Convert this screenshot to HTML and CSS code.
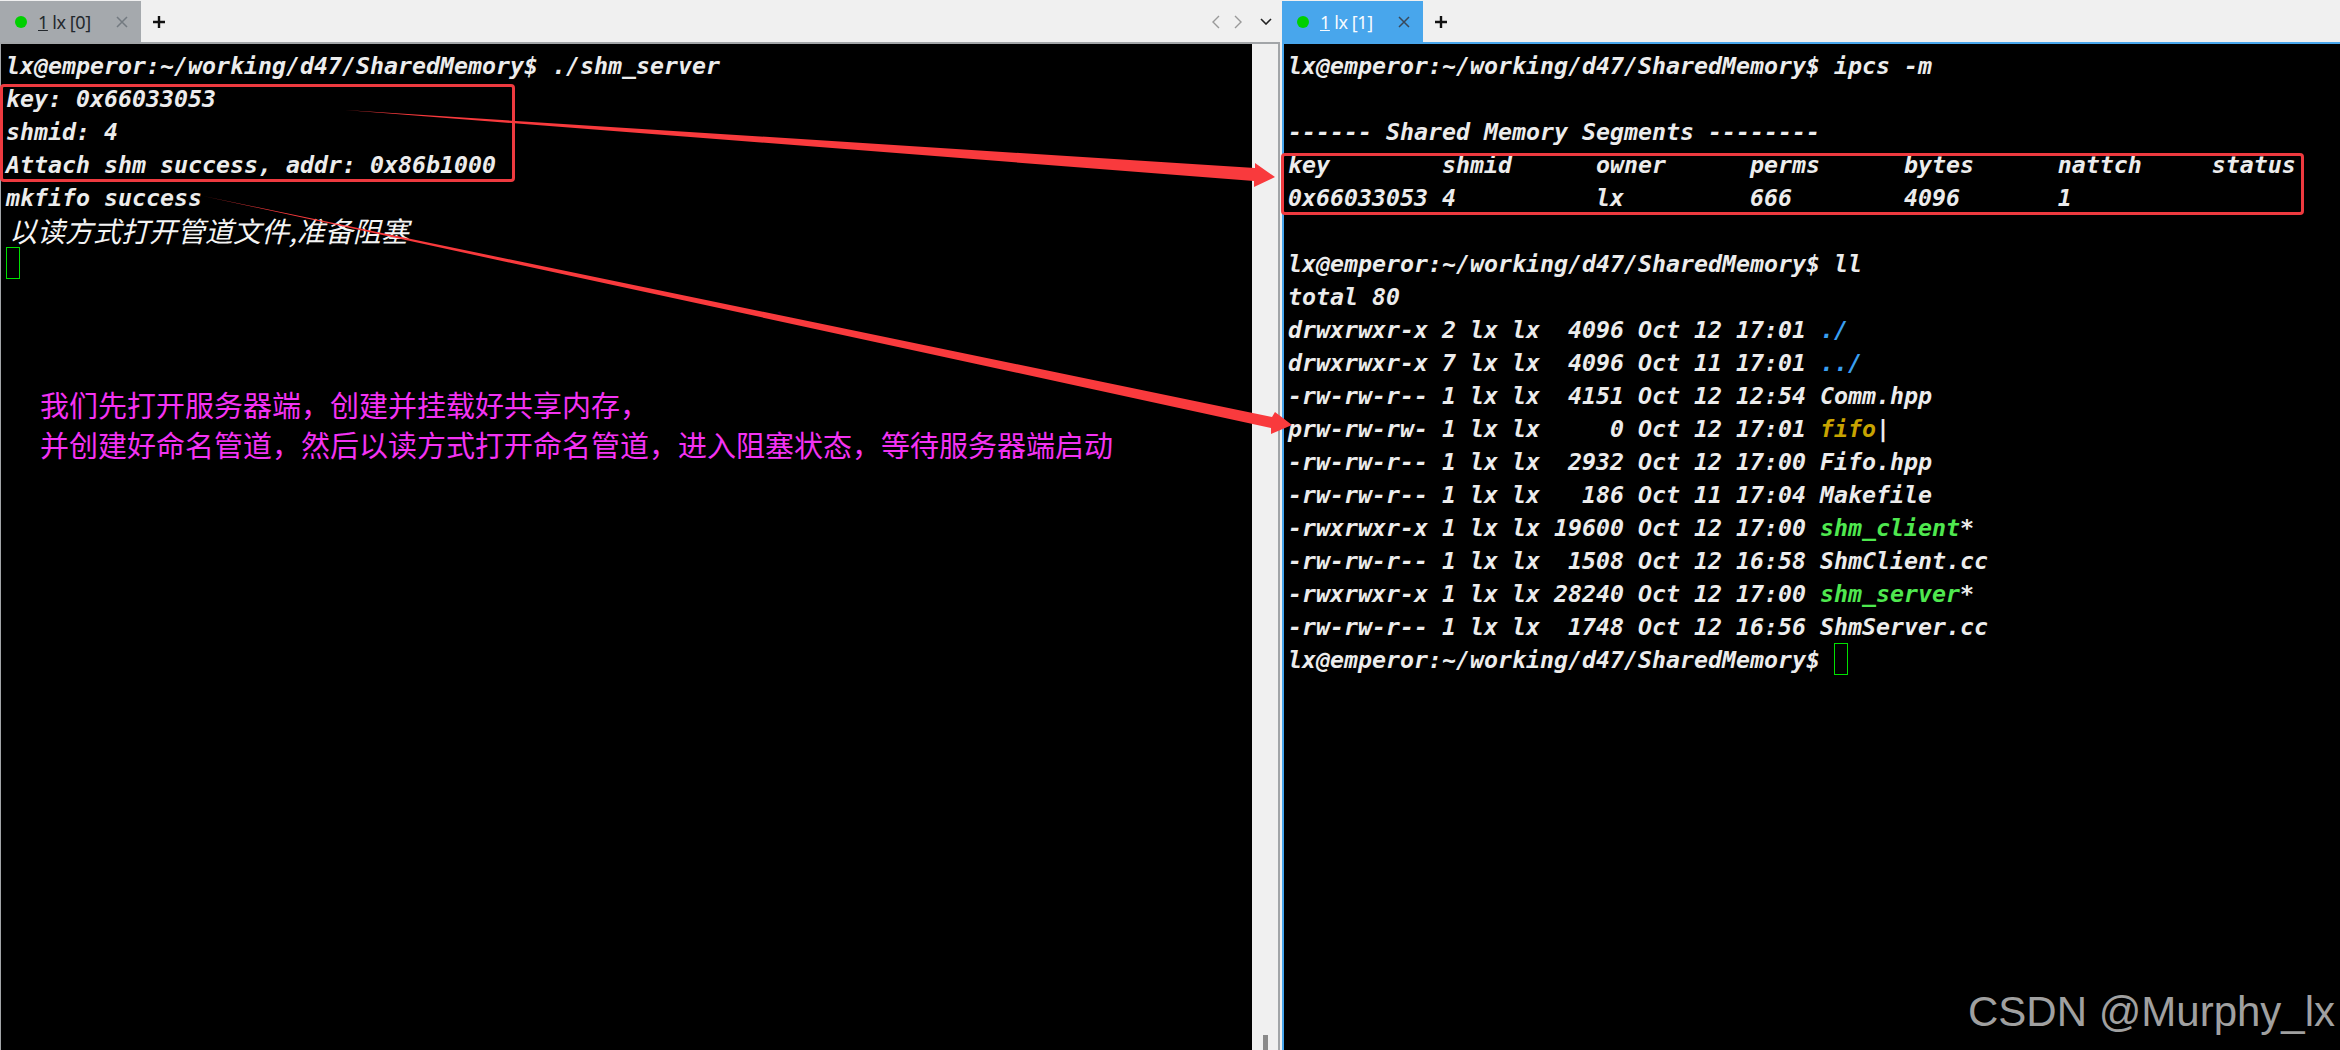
FILE: index.html
```html
<!DOCTYPE html>
<html lang="zh">
<head>
<meta charset="utf-8">
<title>Terminal</title>
<link rel="stylesheet" href="styles.css">
</head>
<body>
<div class="desk">
  <section class="pane pane-left">
    <header class="tabbar">
      <div class="tab tab-idle">
        <span class="dot"></span>
        <span class="tab-label"><u>1</u> lx [0]</span>
        <svg class="tab-close" viewBox="0 0 12 12"><path d="M1 1L11 11M11 1L1 11"/></svg>
      </div>
      <svg class="tab-plus" viewBox="0 0 12 12"><path d="M6 0V12M0 6H12"/></svg>
      <div class="tab-nav">
        <svg class="nav-arrow" viewBox="0 0 8 14"><path d="M7 1L1 7L7 13"/></svg>
        <svg class="nav-arrow" viewBox="0 0 8 14"><path d="M1 1L7 7L1 13"/></svg>
        <svg class="nav-menu" viewBox="0 0 12 7"><path d="M1 1L6 6L11 1"/></svg>
      </div>
    </header>
    <div class="pane-body">
      <div class="term">
        <div class="row">lx@emperor:~/working/d47/SharedMemory$ ./shm_server</div>
        <div class="row">key: 0x66033053</div>
        <div class="row">shmid: 4</div>
        <div class="row">Attach shm success, addr: 0x86b1000</div>
        <div class="row">mkfifo success</div>
        <div class="row row-cjk">以读方式打开管道文件,准备阻塞</div>
        <div class="row"><span class="cursor"></span></div>
      </div>
      <div class="scrollbar"><span class="thumb"></span></div>
    </div>
  </section>
  <section class="pane pane-right">
    <header class="tabbar">
      <div class="tab tab-active">
        <span class="dot"></span>
        <span class="tab-label"><u>1</u> lx [1]</span>
        <svg class="tab-close" viewBox="0 0 12 12"><path d="M1 1L11 11M11 1L1 11"/></svg>
      </div>
      <svg class="tab-plus" viewBox="0 0 12 12"><path d="M6 0V12M0 6H12"/></svg>
    </header>
    <div class="pane-body">
      <div class="term">
        <div class="row">lx@emperor:~/working/d47/SharedMemory$ ipcs -m</div>
        <div class="row"></div>
        <div class="row">------ Shared Memory Segments --------</div>
        <div class="row">key        shmid      owner      perms      bytes      nattch     status</div>
        <div class="row">0x66033053 4          lx         666        4096       1</div>
        <div class="row"></div>
        <div class="row">lx@emperor:~/working/d47/SharedMemory$ ll</div>
        <div class="row">total 80</div>
        <div class="row">drwxrwxr-x 2 lx lx  4096 Oct 12 17:01 <span class="c-dir">./</span></div>
        <div class="row">drwxrwxr-x 7 lx lx  4096 Oct 11 17:01 <span class="c-dir">../</span></div>
        <div class="row">-rw-rw-r-- 1 lx lx  4151 Oct 12 12:54 Comm.hpp</div>
        <div class="row">prw-rw-rw- 1 lx lx     0 Oct 12 17:01 <span class="c-pipe">fifo</span>|</div>
        <div class="row">-rw-rw-r-- 1 lx lx  2932 Oct 12 17:00 Fifo.hpp</div>
        <div class="row">-rw-rw-r-- 1 lx lx   186 Oct 11 17:04 Makefile</div>
        <div class="row">-rwxrwxr-x 1 lx lx 19600 Oct 12 17:00 <span class="c-exe">shm_client</span>*</div>
        <div class="row">-rw-rw-r-- 1 lx lx  1508 Oct 12 16:58 ShmClient.cc</div>
        <div class="row">-rwxrwxr-x 1 lx lx 28240 Oct 12 17:00 <span class="c-exe">shm_server</span>*</div>
        <div class="row">-rw-rw-r-- 1 lx lx  1748 Oct 12 16:56 ShmServer.cc</div>
        <div class="row">lx@emperor:~/working/d47/SharedMemory$ <span class="cursor"></span></div>
      </div>
    </div>
  </section>

  <div class="note">
    <p>我们先打开服务器端，创建并挂载好共享内存，</p>
    <p>并创建好命名管道，然后以读方式打开命名管道，进入阻塞状态，等待服务器端启动</p>
  </div>
  <div class="mark mark-left"></div>
  <div class="mark mark-right"></div>
  <svg class="arrows" viewBox="0 0 2340 1050">
    <polygon points="345,110 1255,168 1255,163 1275,177 1254,187 1254,181"/>
    <polygon points="203,196 1272,417 1275,412 1292,425 1271,434 1271,428"/>
  </svg>
  <div class="watermark">CSDN @Murphy_lx</div>
</div>
</body>
</html>
```
FILE: styles.css
```css
* { box-sizing: border-box; }
html, body { margin: 0; padding: 0; background: #f0f0f0; }
.desk {
  position: relative;
  display: flex;
  gap: 2px;
  width: 2340px;
  height: 1050px;
  overflow: hidden;
  background: #f0f0f0;
  padding-top: 1px;
}
.pane { display: flex; flex-direction: column; height: 1049px; }
.pane-left { width: 1280px; flex: none; }
.pane-right { flex: 1; min-width: 0; }

.tabbar {
  display: flex;
  align-items: center;
  height: 41px;
  flex: none;
  background: #f0f0f0;
}
.tab {
  display: flex;
  align-items: center;
  width: 141px;
  height: 41px;
  padding-left: 15px;
  font-family: "Noto Sans", sans-serif;
  font-size: 18px;
  letter-spacing: -0.4px;
}
.tab-idle { background: #a5a9ad; color: #23282d; }
.tab-active { background: #48a6ec; color: #f8fbfe; }
.dot {
  width: 12px;
  height: 12px;
  border-radius: 50%;
  background: #00d000;
  flex: none;
}
.tab-label { margin-left: 11px; width: 78px; white-space: pre; font-weight: 400; }
.tab-close { width: 12px; height: 12px; fill: none; stroke: #737a80; stroke-width: 1.5; }
.tab-active .tab-close { stroke: #39495a; }
.tab-plus { width: 12px; height: 12px; margin-left: 12px; fill: none; stroke: #111; stroke-width: 2.4; }
.tab-nav { display: flex; align-items: center; margin-left: auto; padding-right: 8px; gap: 14px; }
.nav-arrow { width: 8px; height: 14px; fill: none; stroke: #999; stroke-width: 1.4; }
.nav-menu { width: 12px; height: 7px; margin-left: 4px; fill: none; stroke: #222; stroke-width: 1.6; }

.pane-body { flex: 1; min-height: 0; display: flex; border-top: 2px solid; }
.pane-left .pane-body { border-color: #a2a5a8; border-right: 2px solid #a2a5a8; border-left: 1px solid #a2a5a8; }
.pane-right .pane-body { border-color: #48a6ec; border-left: 2px solid #48a6ec; }

.term {
  flex: 1;
  min-width: 0;
  background: #000;
  color: #ececec;
  padding: 5px 0 0 5px;
  font-family: "DejaVu Sans Mono", "Noto Sans CJK SC", monospace;
  font-size: 23.25px;
  font-style: italic;
  font-weight: 700;
  overflow: hidden;
}
.pane-right .term { padding-left: 4px; }
.row { height: 33px; line-height: 33px; white-space: pre; }
.row-cjk {
  font-family: "Noto Sans CJK SC", sans-serif;
  font-size: 28px;
  font-weight: 400;
  padding-left: 3px;
  color: #f4f4f4;
}
.cursor {
  display: inline-block;
  width: 14px;
  height: 32px;
  border: 1px solid #00e000;
  vertical-align: top;
}
.c-dir { color: #3a9ff0; }
.c-pipe { color: #c8a400; }
.c-exe { color: #4fe84f; }

.scrollbar { width: 26px; flex: none; background: #f0f0f0; display: flex; justify-content: center; align-items: flex-end; }
.thumb { width: 5px; height: 15px; background: #8a8a8a; }

.note {
  position: absolute;
  left: 40px;
  top: 384px;
  color: #f333f3;
  font-family: "Noto Sans CJK SC", sans-serif;
  font-size: 29px;
  font-weight: 400;
  line-height: 40px;
}
.note p { margin: 0; white-space: nowrap; }
.mark { position: absolute; border: 3px solid #ee3a3f; border-radius: 4px; }
.mark-left { left: 0; top: 84px; width: 515px; height: 98px; }
.mark-right { left: 1281px; top: 153px; width: 1023px; height: 62px; }
.arrows { position: absolute; left: 0; top: 0; width: 2340px; height: 1050px; fill: #f93a3d; }
.watermark {
  position: absolute;
  left: 1968px;
  top: 988px;
  color: #a0a0a0;
  font-family: "Liberation Sans", sans-serif;
  font-size: 42px;
  line-height: 48px;
  white-space: pre;
}
```
